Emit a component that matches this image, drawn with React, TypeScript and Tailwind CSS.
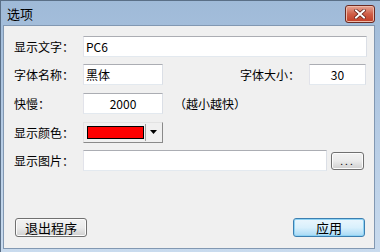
import React from "react";

const font = { fontFamily: '"Noto Sans CJK SC", "Liberation Sans", sans-serif' };

const Label = ({ children, w = "w-[69px]" }: { children: React.ReactNode; w?: string }) => (
  <span className={`${w} shrink-0 text-[12px] leading-none text-black`}>{children}</span>
);

const Field = ({ value, className = "", align = "text-left" }: { value?: string; className?: string; align?: string }) => (
  <div
    className={`h-[21px] shrink-0 bg-white border border-[#abadb3] border-l-[#e2e3ea] border-r-[#dbdfe6] border-b-[#e3e9ef] flex items-center px-[2px] text-[12px] text-black ${align} ${className}`}
  >
    <span className="w-full leading-none">{value}</span>
  </div>
);

const WinButton = ({ children, primary = false }: { children: React.ReactNode; primary?: boolean }) => (
  <button
    className={`w-[72px] h-[19px] rounded-[3px] border text-[13px] leading-none text-black flex items-center justify-center ${
      primary
        ? "border-[#3c7fb1] bg-gradient-to-b from-[#eaf6fd] via-[#d9f0fc] to-[#a7d9f5] shadow-[inset_0_0_0_1px_#8fd3f4]"
        : "border-[#707070] bg-gradient-to-b from-[#f2f2f2] via-[#ebebeb] to-[#cfcfcf] shadow-[inset_0_0_0_1px_#fcfcfc]"
    }`}
  >
    {children}
  </button>
);

export default function App() {
  return (
    <div style={font} className="w-[380px] h-[252px] flex flex-col bg-gradient-to-b from-[#9fbad8] via-[#b5cbe4] to-[#c9dbee] border-t border-l border-[#5a6f87] overflow-hidden">
      {/* Title bar */}
      <div className="h-[24px] flex items-start justify-between shrink-0">
        <span className="pl-[6px] pt-[6px] text-[13px] leading-none text-black">选项</span>
        <div className="mt-[4px] mr-[5px] w-[30px] h-[18px] rounded-[3px] border border-[#6b2a22] bg-gradient-to-b from-[#e6a595] via-[#cf5e47] to-[#c03c24] shadow-[inset_0_0_0_1px_#eebbaa] flex items-center justify-center">
          <svg width="12" height="10" viewBox="0 0 12 10">
            <path d="M2 1.5 L10 8.5 M10 1.5 L2 8.5" stroke="#5a1a12" strokeWidth="3.4" strokeLinecap="square" />
            <path d="M2 1.5 L10 8.5 M10 1.5 L2 8.5" stroke="#ffffff" strokeWidth="2" strokeLinecap="square" />
          </svg>
        </div>
      </div>

      {/* Client area */}
      <div className="ml-[2px] mr-[5px] h-[224px] shrink-0 bg-[#f0f0f0] border border-[#8298b2] flex flex-col">
        <div className="pl-[10px] pt-[10px] flex flex-col">
          <div className="flex items-center h-[21px]">
            <Label>显示文字：</Label>
            <Field value="PC6" className="w-[284px] border-[#7eb4ea] border-l-[#b7d5f3] border-r-[#b7d5f3] border-b-[#c7e2f1]" />
          </div>

          <div className="flex items-center h-[21px] mt-[7px]">
            <Label>字体名称：</Label>
            <Field value="黑体" className="w-[80px]" />
            <span className="ml-[77px] w-[69px] text-[12px] leading-none">字体大小：</span>
            <Field value="30" className="w-[57px]" align="text-center" />
          </div>

          <div className="flex items-center h-[21px] mt-[8px]">
            <Label>快慢：</Label>
            <Field value="2000" className="w-[80px]" align="text-center" />
            <span className="ml-[11px] text-[12px] leading-none">（越小越快）</span>
          </div>

          <div className="flex items-center h-[21px] mt-[8px]">
            <Label>显示颜色：</Label>
            <div className="w-[80px] h-[21px] flex items-center border border-t-[#e3e3e3] border-l-[#e3e3e3] border-r-[#8a8a8a] border-b-[#8a8a8a] bg-[#f0f0f0]">
              <div className="ml-[3px] w-[57px] h-[13px] bg-[#ff0000] border border-black" />
              <div className="ml-[1px] w-px h-[17px] bg-[#a0a0a0]" />
              <div className="flex-1 flex justify-center">
                <svg width="8" height="5" viewBox="0 0 8 5">
                  <path d="M0 0 H7 L3.5 4 Z" fill="#000" />
                </svg>
              </div>
            </div>
          </div>

          <div className="flex items-center h-[21px] mt-[7px]">
            <Label>显示图片：</Label>
            <Field className="w-[244px]" />
            <button className="ml-[4px] w-[33px] h-[18px] rounded-[3px] border border-[#707070] bg-gradient-to-b from-[#f2f2f2] via-[#ebebeb] to-[#cfcfcf] shadow-[inset_0_0_0_1px_#fcfcfc] text-[10px] leading-none tracking-[2px] text-black flex items-center justify-center">
              ...
            </button>
          </div>
        </div>

        <div className="flex-1" />

        <div className="flex justify-between pl-[11px] pr-[9px] pb-[11px]">
          <WinButton>退出程序</WinButton>
          <WinButton primary>应用</WinButton>
        </div>
      </div>
    </div>
  );
}
